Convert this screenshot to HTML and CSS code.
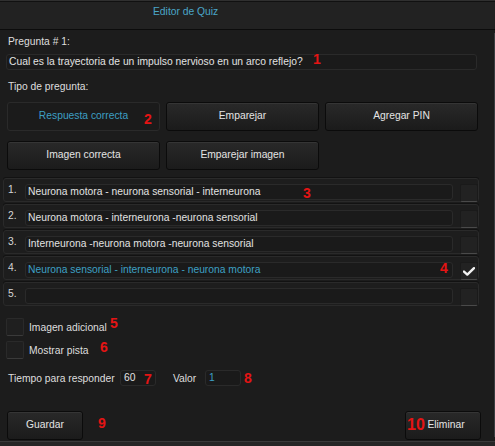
FILE: index.html
```html
<!DOCTYPE html>
<html lang="es">
<head>
<meta charset="utf-8">
<title>Editor de Quiz</title>
<link rel="stylesheet" href="styles.css">
</head>
<body>
<div class="window">
  <div class="titlebar"><span class="title">Editor de Quiz</span></div>
  <div class="main">
    <div class="content">
      <div class="label lbl-q">Pregunta # 1:</div>
      <div class="field field-q">Cual es la trayectoria de un impulso nervioso en un arco reflejo?</div>
      <div class="label lbl-type">Tipo de pregunta:</div>
      <div class="types">
        <div class="btn btn-active">Respuesta correcta</div>
        <div class="btn">Emparejar</div>
        <div class="btn">Agregar PIN</div>
        <div class="btn">Imagen correcta</div>
        <div class="btn">Emparejar imagen</div>
      </div>
      <div class="answers">
        <div class="ans"><span class="num">1.</span><div class="field ans-field">Neurona motora - neurona sensorial - interneurona</div><div class="chk"></div></div>
        <div class="ans"><span class="num">2.</span><div class="field ans-field">Neurona motora - interneurona -neurona sensorial</div><div class="chk"></div></div>
        <div class="ans"><span class="num">3.</span><div class="field ans-field">Interneurona -neurona motora -neurona sensorial</div><div class="chk"></div></div>
        <div class="ans"><span class="num">4.</span><div class="field ans-field blue">Neurona sensorial - interneurona - neurona motora</div><div class="chk"><svg class="tick" width="12" height="9" viewBox="0 0 12 9"><path d="M1 4.6 L4.3 7.6 L11 1.2" fill="none" stroke="#f2f2f2" stroke-width="2.4" stroke-linecap="round" stroke-linejoin="round"/></svg></div></div>
        <div class="ans"><span class="num">5.</span><div class="field ans-field"></div><div class="chk"></div></div>
      </div>
      <div class="opt opt-first"><div class="box"></div><span>Imagen adicional</span></div>
      <div class="opt opt-second"><div class="box"></div><span>Mostrar pista</span></div>
      <div class="timing">
        <span class="t-label">Tiempo para responder</span>
        <div class="field small">60</div>
        <span class="v-label">Valor</span>
        <div class="field small blue">1</div>
      </div>
      <div class="footer">
        <div class="btn fbtn">Guardar</div>
        <div class="btn fbtn btn-right">Eliminar</div>
      </div>
    </div>
    <div class="scrollbar"></div>
  </div>
  <div class="bottom"></div>

  <span class="mark m1">1</span>
  <span class="mark m2">2</span>
  <span class="mark m3">3</span>
  <span class="mark m4">4</span>
  <span class="mark m5">5</span>
  <span class="mark m6">6</span>
  <span class="mark m7">7</span>
  <span class="mark m8">8</span>
  <span class="mark m9">9</span>
  <span class="mark m10">10</span>
</div>
</body>
</html>
```
FILE: styles.css
```css
* { box-sizing: border-box; }
html, body {
  margin: 0;
  padding: 0;
  width: 495px;
  height: 446px;
  overflow: hidden;
  background: #1c1c1c;
  font-family: "Liberation Sans", Arial, sans-serif;
  font-size: 10.3px;
  color: #dedede;
  white-space: nowrap;
}
.window {
  position: relative;
  width: 495px;
  height: 446px;
  display: flex;
  flex-direction: column;
}
.titlebar {
  height: 30px;
  flex: none;
  background: #222222;
  border-top: 1px solid #303030;
  border-bottom: 1px solid #0c0c0c;
  box-shadow: inset 0 1px 0 #111;
  padding: 4px 0 0 153px;
  line-height: 13px;
}
.title { color: #4aa6c8; }
.main {
  flex: none;
  height: 411px;
  display: flex;
  background: #1c1c1c;
}
.content {
  flex: 1;
  display: flex;
  flex-direction: column;
}
.scrollbar {
  flex: none;
  width: 5px;
  margin: 3px 1px 4px 0;
  background: #50555a;
  border-left: 1px solid #3a3d40;
}
.bottom {
  flex: 1;
  background: #262626;
  border-top: 1px solid #3a3a3a;
}
.label { line-height: 13px; padding-left: 8px; }
.lbl-q { margin-top: 5px; }
.lbl-type { margin-top: 10px; }
.field {
  height: 16px;
  background: #1a1a1a;
  border: 1px solid #2a2a2a;
  border-radius: 3px;
  line-height: 14px;
  padding-left: 2px;
  color: #e2e2e2;
  overflow: hidden;
}
.field-q { margin: 6px 17px 0 6px; }
.blue { color: #3da0c4; }
.types {
  margin: 9px 0 0 7px;
  display: grid;
  grid-template-columns: 153px 153px 153px;
  grid-auto-rows: 29px;
  column-gap: 6px;
  row-gap: 10px;
}
.btn {
  display: flex;
  align-items: center;
  justify-content: center;
  border-radius: 3px;
  border: 1px solid #0b0b0b;
  background: linear-gradient(#292929, #1b1b1b);
  box-shadow: inset 0 1px 0 #353535;
  color: #e4e4e4;
  padding-bottom: 2px;
}
.btn-active {
  background: #1b1b1b;
  border: 1px solid #2a2a2a;
  box-shadow: none;
  color: #3d9fc3;
}
.answers {
  margin: 8px 15px 0 3px;
  display: flex;
  flex-direction: column;
  gap: 2px;
}
.ans {
  height: 24px;
  display: flex;
  align-items: flex-start;
  border: 1px solid #2a2a2a;
  border-radius: 3px;
  background: #1d1d1d;
  box-shadow: 0 -1px 0 #121212;
}
.num {
  width: 21px;
  padding-left: 4px;
  line-height: 13px;
  margin-top: 4px;
  color: #d6d6d6;
}
.ans-field {
  width: 428px;
  margin-top: 5px;
  flex: none;
}
.chk {
  width: 18px;
  height: 18px;
  margin: 5px 0 0 7px;
  background: #222222;
  border: 1px solid #1a1a1a;
  border-bottom: 1px solid #4a4a4a;
  border-radius: 2px;
  display: flex;
  align-items: center;
  justify-content: center;
}
.tick { display: block; }
.opt {
  display: flex;
  align-items: center;
  padding-left: 6px;
  height: 18px;
  gap: 5px;
  line-height: 13px;
}
.opt-first { margin-top: 12px; }
.opt-second { margin-top: 5px; }
.box {
  width: 18px;
  height: 18px;
  background: #1f1f1f;
  border: 1px solid #2a2a2a;
  border-bottom-color: #3a3a3a;
  border-radius: 2px;
}
.timing {
  margin-top: 11px;
  display: flex;
  align-items: center;
  padding-left: 8px;
  height: 16px;
}
.t-label { width: 112px; }
.v-label { margin-left: 17px; width: 32px; }
.small {
  width: 36px;
  padding-left: 3px;
  background: #1a1a1a;
}
.footer {
  margin-top: 25px;
  display: flex;
  justify-content: space-between;
  padding: 0 13px 0 7px;
}
.fbtn {
  width: 76px;
  height: 29px;
}
.btn-right { padding-left: 6px; }
.mark {
  position: absolute;
  color: #e41414;
  font-weight: bold;
  font-size: 14px;
  line-height: 14px;
}
.m1 { left: 313px; top: 52px; }
.m2 { left: 144px; top: 112px; }
.m3 { left: 303px; top: 186px; }
.m4 { left: 440px; top: 261px; }
.m5 { left: 110px; top: 316px; }
.m6 { left: 100px; top: 340px; }
.m7 { left: 144px; top: 372px; }
.m8 { left: 244px; top: 371px; }
.m9 { left: 98px; top: 416px; }
.m10 { left: 407px; top: 417px; font-size: 16px; line-height: 16px; }
```
